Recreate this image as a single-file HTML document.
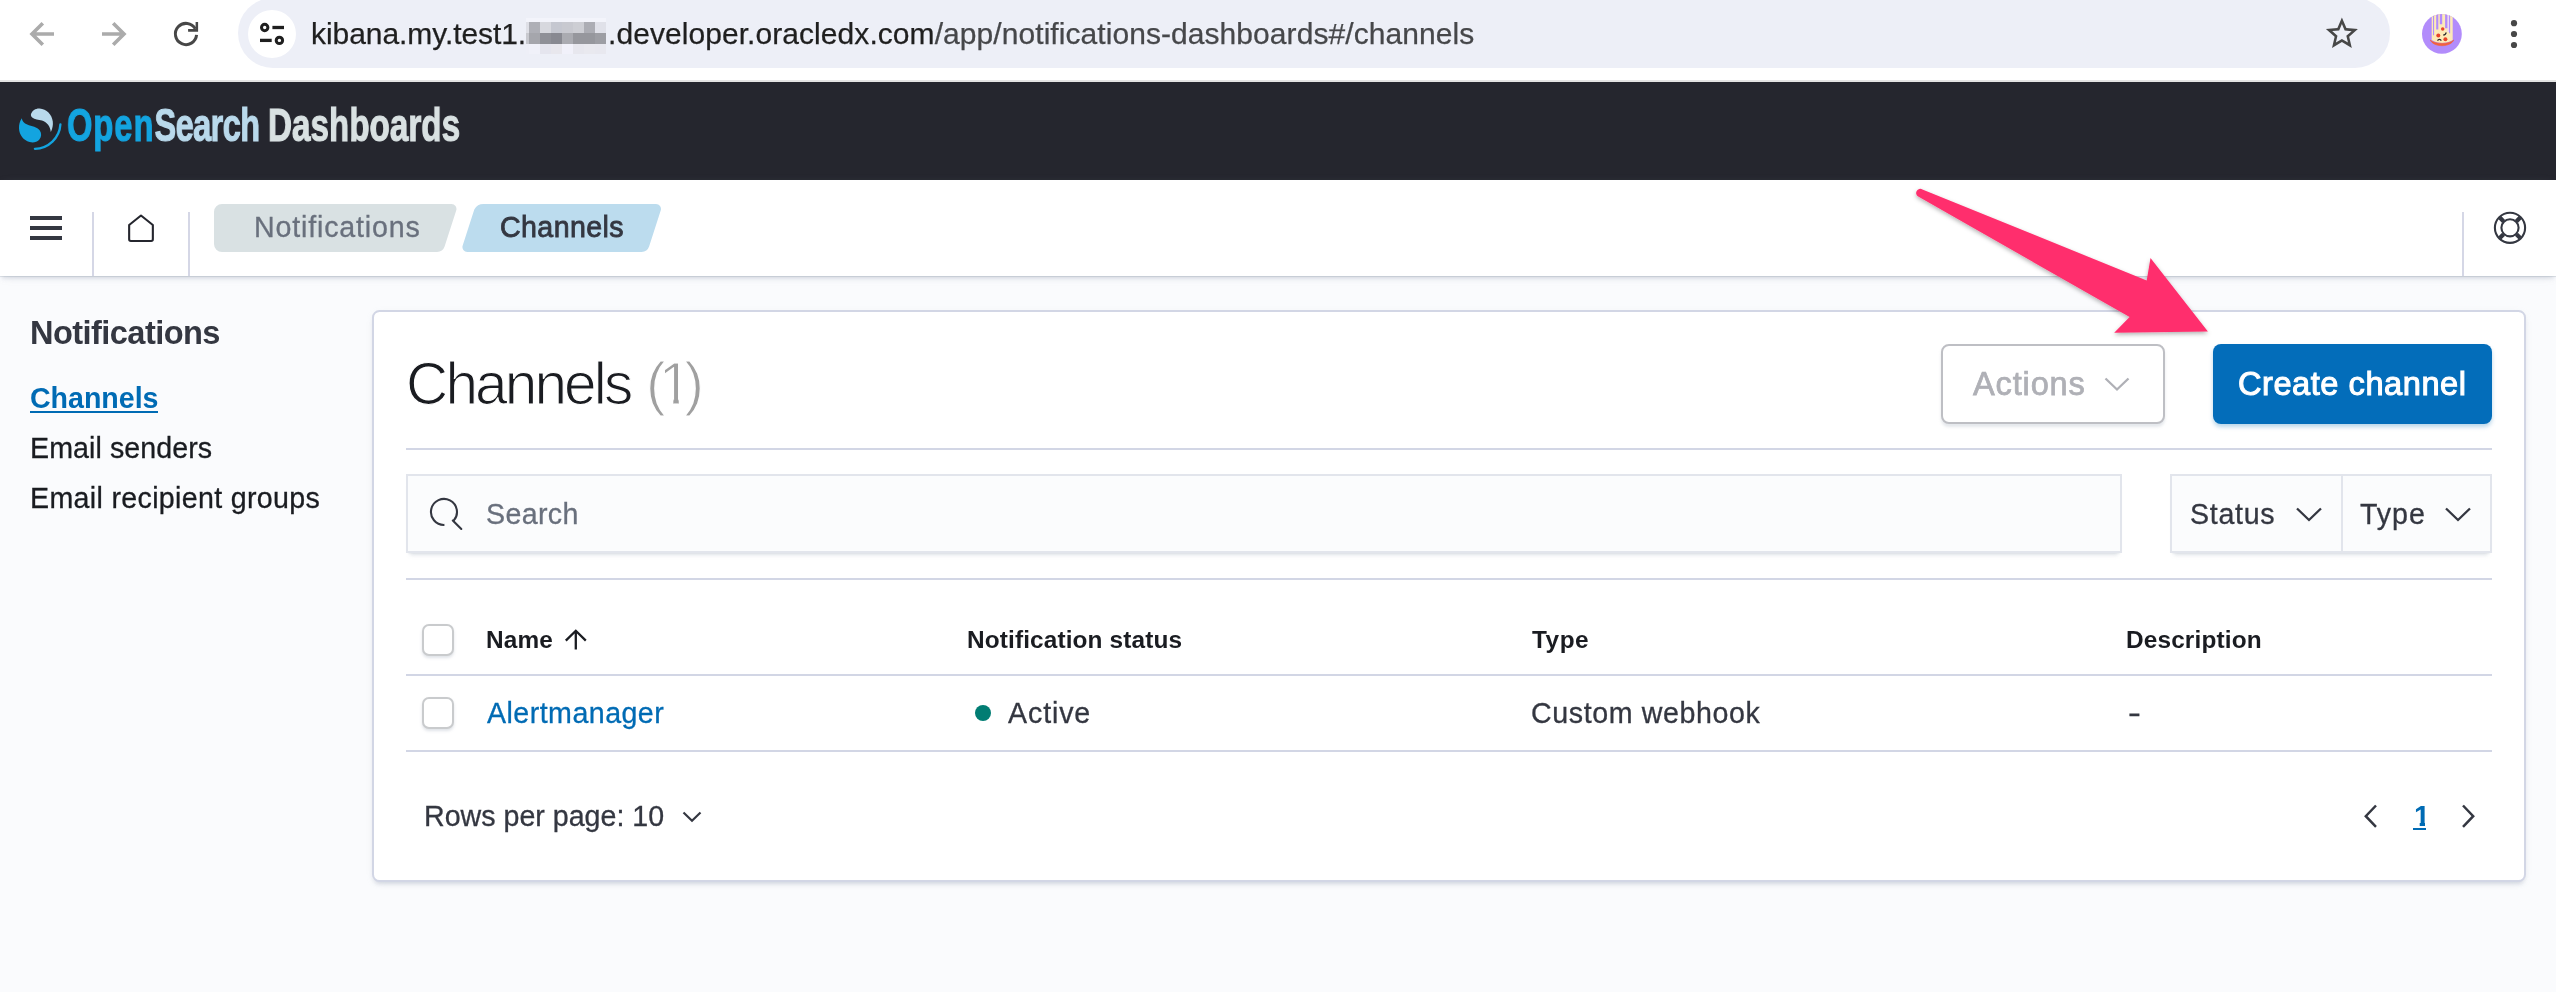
<!DOCTYPE html>
<html lang="en">
<head>
<meta charset="utf-8">
<title>Channels - Notifications - OpenSearch Dashboards</title>
<style>
*{box-sizing:border-box;margin:0;padding:0}
html,body{width:2556px;height:992px;overflow:hidden;background:#fafbfd}
body{position:relative;font-family:"Liberation Sans",sans-serif;color:#343741}
.abs{position:absolute}
.t{position:absolute;white-space:nowrap;line-height:1;will-change:transform}
/* browser toolbar */
#toolbar{left:0;top:0;width:2556px;height:80px;background:#fff}
#tbline{left:0;top:80px;width:2556px;height:2px;background:#e3e3e3}
#pill{left:238px;top:-2px;width:2152px;height:70px;border-radius:35px;background:#edeff7}
#siteinfo{left:248px;top:10px;width:48px;height:48px;border-radius:50%;background:#fff}
.url{font-size:30px;color:#1f1f1f;-webkit-text-stroke:.25px currentColor}
/* app header */
#hdr{left:0;top:82px;width:2556px;height:98px;background:#25262e}
.logo{font-weight:bold;font-size:46.5px;transform-origin:0 0;-webkit-text-stroke:1.1px currentColor}
/* breadcrumb bar */
#bar{left:0;top:180px;width:2556px;height:96px;background:#fff;box-shadow:0 4px 4px -2px rgba(152,162,179,.34),0 2px 10px -4px rgba(152,162,179,.34),0 1px 0 rgba(152,162,179,.25)}
.vsep{width:2px;top:212px;height:64px;background:#d5d7e6}
.crumb{top:204px;height:48px}
/* sidebar */
.nav{font-size:28.6px;color:#1a1c21;-webkit-text-stroke:.3px currentColor}
/* panel */
#panel{left:372px;top:310px;width:2154px;height:572px;background:#fff;border:2px solid #d2d6e5;border-radius:7.5px;box-shadow:0 4px 4px -2px rgba(152,162,179,.32),0 2px 10px -4px rgba(152,162,179,.32)}
.hr{left:406px;width:2086px;height:2px;background:#d2d6e5}
.fld{background:#fbfcfd;border:2px solid #e2e5ec;box-shadow:0 2px 2px -2px rgba(152,162,179,.25),0 6px 4px -4px rgba(152,162,179,.3)}
.cb{left:422px;width:32px;height:32px;border:2px solid #c9cbcd;border-radius:7px;background:#fff;box-shadow:0 2px 3px rgba(152,162,179,.3)}
.th{font-size:24.4px;font-weight:bold;color:#1a1c21}
.td{font-size:28.6px;color:#343741;-webkit-text-stroke:.3px currentColor}
</style>
</head>
<body>

<!-- ============ Browser toolbar ============ -->
<div class="abs" id="toolbar"></div>
<div class="abs" id="tbline"></div>
<div class="abs" id="pill"></div>
<div class="abs" id="siteinfo"></div>
<svg class="abs" id="tbicons" style="left:0;top:0" width="2556" height="80" viewBox="0 0 2556 80" fill="none">
  <!-- back -->
  <path d="M54 34H32.5M42.8 23.3L32 34l10.8 10.7" stroke="#ababab" stroke-width="3.6"/>
  <!-- forward -->
  <path d="M102 34h21.5M113.2 23.3L124 34l-10.8 10.7" stroke="#ababab" stroke-width="3.6"/>
  <!-- reload -->
  <path d="M196.560 34.920A10.600 10.600 0 1 1 195.300 28.900" stroke="#474747" stroke-width="3"/>
  <path d="M198.100 22.100v9.600h-10v-2.600h7.500v-7z" fill="#474747"/>
  <!-- tune / site info -->
  <circle cx="264.7" cy="27.5" r="3.2" stroke="#1f1f1f" stroke-width="3"/>
  <path d="M272.4 27.5H284" stroke="#1f1f1f" stroke-width="3.3"/>
  <path d="M260 40.4h11.7" stroke="#1f1f1f" stroke-width="3.3"/>
  <circle cx="279.4" cy="40.4" r="3.2" stroke="#1f1f1f" stroke-width="3"/>
  <!-- star -->
  <g transform="translate(2322.7 14.3) scale(1.6)"><path fill="#474747" fill-rule="evenodd" d="M22 9.24l-7.19-.62L12 2 9.19 8.63 2 9.24l5.46 4.73L5.82 21 12 17.27 18.18 21l-1.63-7.03L22 9.24zM12 15.4l-3.76 2.27 1-4.28-3.32-2.88 4.38-.38L12 6.1l1.71 4.04 4.38.38-3.32 2.88 1 4.28L12 15.4z"/></g>
  <!-- avatar -->
  <g id="avatar">
    <circle cx="2441.900" cy="33.900" r="19.900" fill="#b28cfb"/>
    <clipPath id="avc"><circle cx="2441.900" cy="33.900" r="19.900"/></clipPath>
    <g clip-path="url(#avc)">
      <path d="M2431.700 12h21v28c-6 4-15 4-21 0z" fill="#fdeab8"/>
      <rect x="2447.400" y="12" width="1.900" height="20" fill="#ecd6f7"/>
      <path d="M2433.550 12v23.300" stroke="#b28cfb" stroke-width="1.100"/>
      <path d="M2437.250 12v17.500" stroke="#b28cfb" stroke-width="2.100"/>
      <path d="M2441 12v12.200" stroke="#b28cfb" stroke-width="2.400"/>
      <path d="M2446.250 12v16.200" stroke="#b28cfb" stroke-width="2.300"/>
      <path d="M2449.600 12v21.200" stroke="#b28cfb" stroke-width="1.100"/>
      <path d="M2430.200 40c2.300 2.200 6.600 3.400 11.800 3.400s9.500-1.200 11.800-3.400c-1.800 3.600-6.300 5.700-11.800 5.700s-10-2.100-11.800-5.700z" fill="#f4623a" stroke="#f4623a" stroke-width=".6" stroke-linejoin="round"/>
      <circle cx="2442.700" cy="29" r="1.750" fill="#e8442a"/>
      <circle cx="2438.300" cy="35.500" r="2" fill="#e8442a"/>
      <circle cx="2445.400" cy="39.300" r="2" fill="#e8442a"/>
      <path d="M2443.300 35c1.500 0 2.600-1 2.800-2.500" stroke="#2b2b2b" stroke-width="1.400"/>
      <path d="M2437.500 40.600c.9-1.700 2.900-1.700 3.800 0" stroke="#2b2b2b" stroke-width="1.200"/>
    </g>
  </g>
  <!-- menu dots -->
  <circle cx="2514" cy="23.2" r="3.1" fill="#474747"/>
  <circle cx="2514" cy="34" r="3.1" fill="#474747"/>
  <circle cx="2514" cy="45" r="3.1" fill="#474747"/>
  <!-- blurred (pixelated) host segment -->
  <g id="blur" shape-rendering="crispEdges">
    <rect x="526.2" y="18.1" width="2.8" height="3.9" fill="#f3f4fb"/><rect x="529.0" y="18.1" width="11.1" height="3.9" fill="#f3f4fb"/><rect x="540.0" y="18.1" width="11.2" height="3.9" fill="#f3f4fb"/><rect x="551.1" y="18.1" width="10.9" height="3.9" fill="#f3f4fb"/><rect x="562.0" y="18.1" width="11.2" height="3.9" fill="#f3f4fb"/><rect x="573.1" y="18.1" width="10.9" height="3.9" fill="#f3f4fb"/><rect x="584.0" y="18.1" width="10.9" height="3.9" fill="#f3f4fb"/><rect x="594.9" y="18.1" width="11.4" height="3.9" fill="#f3f4fb"/>
    <rect x="526.2" y="22.0" width="2.8" height="11.2" fill="#dedfe6"/><rect x="529.0" y="22.0" width="11.1" height="11.2" fill="#aeafb6"/><rect x="540.0" y="22.0" width="11.2" height="11.2" fill="#d7d8de"/><rect x="551.1" y="22.0" width="10.9" height="11.2" fill="#c5c7d0"/><rect x="562.0" y="22.0" width="11.2" height="11.2" fill="#c8c9d0"/><rect x="573.1" y="22.0" width="10.9" height="11.2" fill="#cdced4"/><rect x="584.0" y="22.0" width="10.9" height="11.2" fill="#acadb4"/><rect x="594.9" y="22.0" width="11.4" height="11.2" fill="#e0e1e9"/>
    <rect x="526.2" y="33.1" width="2.8" height="10.7" fill="#c8c9cf"/><rect x="529.0" y="33.1" width="11.1" height="10.7" fill="#a5a6ac"/><rect x="540.0" y="33.1" width="11.2" height="10.7" fill="#8f9097"/><rect x="551.1" y="33.1" width="10.9" height="10.7" fill="#888991"/><rect x="562.0" y="33.1" width="11.2" height="10.7" fill="#aaabb1"/><rect x="573.1" y="33.1" width="10.9" height="10.7" fill="#96979d"/><rect x="584.0" y="33.1" width="10.9" height="10.7" fill="#96979d"/><rect x="594.9" y="33.1" width="11.4" height="10.7" fill="#9d9ea4"/>
    <rect x="526.2" y="43.8" width="2.8" height="10.5" fill="#eeeff7"/><rect x="529.0" y="43.8" width="11.1" height="10.5" fill="#f0f1f9"/><rect x="540.0" y="43.8" width="11.2" height="10.5" fill="#e5e5ee"/><rect x="551.1" y="43.8" width="10.9" height="10.5" fill="#e8e7ed"/><rect x="562.0" y="43.8" width="11.2" height="10.5" fill="#f1f1fa"/><rect x="573.1" y="43.8" width="10.9" height="10.5" fill="#e7e7ee"/><rect x="584.0" y="43.8" width="10.9" height="10.5" fill="#e9e9ef"/><rect x="594.9" y="43.8" width="11.4" height="10.5" fill="#e8e8ef"/>
  </g>
</svg>
<span class="t url" id="url1" style="left:311.00px;top:19px;letter-spacing:-0.067px">kibana.my.test1.</span>
<span class="t url" id="url2" style="left:608.00px;top:19px;letter-spacing:0.065px">.developer.oracledx.com<span style="color:#46474a">/app/notifications-dashboards#/channels</span></span>

<!-- ============ App header ============ -->
<div class="abs" id="hdr"></div>
<svg class="abs" id="mark" style="left:14px;top:100px" width="54" height="56" viewBox="14 100 54 56" fill="none">
  <!-- light swoosh -->
  <path d="M31 114c1.200-3.600 4.600-5.800 8.600-5.600 7 .4 12.400 5.800 13.200 13.200.400 3.700-.300 7.200-2 10.300-.600-5.500-3.600-9.500-8.800-11.300-3.400-1.200-7.400-1.200-9.800-3.200-1-.900-1.500-2-1.200-3.400z" fill="#b9d9eb"/>
  <!-- blue blob -->
  <path d="M21.800 118.300c.300 3 2.300 5 5.400 6.300 4.600 1.900 10 2.200 12.600 6 2 3 1.800 6.600-.600 9.200-2.400 2.500-6 3.300-9.600 2.300-6.200-1.700-10.400-7.200-10.600-13.800-.100-3.800.800-7.200 2.800-10z" fill="#13a4e0"/>
  <!-- outer arc -->
  <path d="M60.400 124.400a26 26 0 0 1-25.500 24.400" stroke="#13a4e0" stroke-width="2.300" stroke-linecap="round"/>
</svg>
<span class="t logo" id="lg1" style="left:67.2px;top:102px;color:#13a4e0;transform:scaleX(.7025)"><span style="letter-spacing:1.4px">Open</span><span style="color:#b9d9eb;letter-spacing:-.95px">Search</span></span>
<span class="t logo" id="lg2" style="left:267.5px;top:102px;color:#d9e1e2;transform:scaleX(.7145)">Dashboards</span>

<!-- ============ Breadcrumb bar ============ -->
<div class="abs" id="bar"></div>
<!-- hamburger -->
<div class="abs" style="left:30px;top:216px;width:32px;height:4px;background:#343741"></div>
<div class="abs" style="left:30px;top:226px;width:32px;height:4px;background:#343741"></div>
<div class="abs" style="left:30px;top:236px;width:32px;height:4px;background:#343741"></div>
<div class="abs vsep" style="left:92px"></div>
<!-- home -->
<svg class="abs" id="home" style="left:124px;top:210px" width="34" height="36" viewBox="124 210 34 36" fill="none">
  <path d="M141 215.500l11.850 9.500v14.300a1.700 1.700 0 0 1-1.700 1.700h-20.300a1.700 1.700 0 0 1-1.700-1.700v-14.300z" stroke="#25262e" stroke-width="2.100" stroke-linejoin="round"/>
</svg>
<div class="abs vsep" style="left:188px"></div>
<!-- breadcrumbs -->
<svg class="abs" id="crumbs" style="left:210px;top:200px" width="460" height="56" viewBox="210 200 460 56">
  <path d="M222 204h229.500a5 5 0 0 1 4.700 6.600l-11.600 36a8 8 0 0 1-7.600 5.400H222a8 8 0 0 1-8-8v-32a8 8 0 0 1 8-8z" fill="#d9e1e3"/>
  <path d="M484.600 204H656a5 5 0 0 1 4.700 6.600l-11.600 36a8 8 0 0 1-7.600 5.400H467.400a5 5 0 0 1-4.700-6.600l11.600-36a10.800 10.800 0 0 1 10.300-5.400z" fill="#bcdcee"/>
</svg>
<span class="t" id="bc1" style="left:254.00px;top:213.2px;font-size:28.6px;color:#69707d;-webkit-text-stroke:.3px currentColor;letter-spacing:0.83px">Notifications</span>
<span class="t" id="bc2" style="left:499.70px;top:213.2px;font-size:28.6px;color:#343741;-webkit-text-stroke:.8px #343741;letter-spacing:0.399px">Channels</span>
<div class="abs vsep" style="left:2462px"></div>
<!-- help (lifesaver) -->
<svg class="abs" id="help" style="left:2490px;top:208px" width="40" height="40" viewBox="2490 208 40 40" fill="none">
  <circle cx="2510" cy="227.800" r="15.100" stroke="#343741" stroke-width="2.100"/>
  <circle cx="2510" cy="227.800" r="8.600" stroke="#343741" stroke-width="2.100"/>
  <path d="M2499.800 217.600l3.800 3.800M2520.200 217.600l-3.800 3.800M2499.800 238l3.800-3.800M2520.200 238l-3.800-3.800" stroke="#343741" stroke-width="4.200"/>
</svg>

<!-- ============ Sidebar ============ -->
<span class="t" id="sbT" style="left:30.00px;top:317.3px;font-size:32.6px;font-weight:bold;color:#343741;letter-spacing:-0.570px">Notifications</span>
<span class="t nav" id="sb1" style="left:30.20px;top:384.4px;font-weight:bold;color:#006bb4;letter-spacing:-0.030px;-webkit-text-stroke:0">Channels</span>
<div class="abs" id="sb1u" style="left:30px;top:410.5px;width:128px;height:2.600px;background:#006bb4"></div>
<span class="t nav" id="sb2" style="left:30.00px;top:434.2px;letter-spacing:0.080px">Email senders</span>
<span class="t nav" id="sb3" style="left:30.00px;top:484.4px;letter-spacing:0.330px">Email recipient groups</span>

<!-- ============ Panel ============ -->
<div class="abs" id="panel"></div>
<span class="t" id="ttl" style="left:406.00px;top:354.8px;font-size:58.5px;color:#1a1c21;-webkit-text-stroke:1.200px #fff;letter-spacing:-2.857px">Channels</span>
<span class="t" id="cnt" style="left:646.00px;top:354.8px;font-size:58.5px;color:#a0a0a0;-webkit-text-stroke:1.200px #fff;letter-spacing:-6.750px">(<span id="cnt1" style="display:inline-block;clip-path:polygon(0 0,100% 0,100% 44.1px,20px 44.1px,20px 100%,14.6px 100%,14.6px 44.1px,0 44.1px)">1</span>)</span>
<!-- Actions button -->
<div class="abs" id="actbtn" style="left:1941px;top:344px;width:224px;height:80px;border:2px solid #bebfc4;border-radius:8px;background:#fff;box-shadow:0 3px 3px rgba(152,162,179,.25)"></div>
<span class="t" id="act" style="left:1973.00px;top:367.5px;font-size:32.6px;color:#afb0b6;-webkit-text-stroke:.75px currentColor;letter-spacing:0.834px">Actions</span>
<svg class="abs" id="actch" style="left:2100px;top:372px" width="34" height="24" viewBox="2100 372 34 24" fill="none"><path d="M2105.500 378.500l11.500 11 11.500-11" stroke="#afb0b6" stroke-width="2.300"/></svg>
<!-- Create channel button -->
<div class="abs" id="crbtn" style="left:2213px;top:344px;width:279px;height:80px;border-radius:8px;background:#036dba;box-shadow:0 3px 4px rgba(0,107,180,.28)"></div>
<span class="t" id="cr" style="left:2238.00px;top:367.5px;font-size:32.6px;color:#fff;-webkit-text-stroke:1.05px #fff;letter-spacing:0.539px">Create channel</span>
<div class="abs hr" style="top:448px"></div>
<!-- search -->
<div class="abs fld" id="srch" style="left:406px;top:474px;width:1716px;height:79px"></div>
<svg class="abs" id="sico" style="left:426px;top:494px" width="40" height="40" viewBox="426 494 40 40" fill="none">
  <path d="M453.630 520.630A13 13 0 1 0 444.420 524.920" stroke="#343741" stroke-width="2.100"/>
  <path d="M452.800 520.500L461.300 528.900" stroke="#343741" stroke-width="2.100" stroke-linecap="round"/>
</svg>
<span class="t" id="sph" style="left:486.00px;top:500px;font-size:28.6px;color:#69707d;-webkit-text-stroke:.3px currentColor;letter-spacing:0.360px">Search</span>
<!-- filters -->
<div class="abs fld" id="flt" style="left:2170px;top:474px;width:322px;height:79px"></div>
<div class="abs" style="left:2340.500px;top:476px;width:2px;height:75px;background:#e2e5ec"></div>
<span class="t" id="f1" style="left:2190.00px;top:500px;font-size:28.6px;color:#343741;-webkit-text-stroke:.3px currentColor;letter-spacing:0.700px">Status</span>
<svg class="abs" style="left:2292px;top:502px" width="34" height="24" viewBox="2292 502 34 24" fill="none"><path d="M2297 508.500l12 11.500 12-11.500" stroke="#343741" stroke-width="2.300"/></svg>
<span class="t" id="f2" style="left:2360.20px;top:500px;font-size:28.6px;color:#343741;-webkit-text-stroke:.3px currentColor;letter-spacing:0.933px">Type</span>
<svg class="abs" style="left:2441px;top:502px" width="34" height="24" viewBox="2441 502 34 24" fill="none"><path d="M2446 508.500l12 11.500 12-11.500" stroke="#343741" stroke-width="2.300"/></svg>
<div class="abs hr" style="top:578px"></div>
<!-- table header -->
<div class="abs cb" style="top:624px"></div>
<span class="t th" id="h1" style="left:486.00px;top:627.5px;letter-spacing:0.133px">Name</span>
<svg class="abs" id="sortup" style="left:560px;top:626px" width="32" height="28" viewBox="560 626 32 28" fill="none"><path d="M575.800 649.500v-18.500M565.800 640.600l10-9.800 10 9.800" stroke="#1a1c21" stroke-width="2.300"/></svg>
<span class="t th" id="h2" style="left:966.8px;top:627.5px;letter-spacing:0.123px">Notification status</span>
<span class="t th" id="h3" style="left:1531.50px;top:627.5px;letter-spacing:0.499px">Type</span>
<span class="t th" id="h4" style="left:2126.40px;top:627.5px;letter-spacing:0.140px">Description</span>
<div class="abs hr" style="top:674px"></div>
<!-- row -->
<div class="abs cb" style="top:697px"></div>
<span class="t td" id="r1" style="left:487.00px;top:699px;color:#006bb4;letter-spacing:0.464px">Alertmanager</span>
<div class="abs" id="dot" style="left:974.500px;top:704.500px;width:16.500px;height:16.500px;border-radius:50%;background:#017d73"></div>
<span class="t td" id="r2" style="left:1007.80px;top:699px;letter-spacing:0.880px">Active</span>
<span class="t td" id="r3" style="left:1530.50px;top:699px;letter-spacing:0.615px">Custom webhook</span>
<span class="t td" id="r4" style="left:2128.30px;top:698.6px;transform:scaleX(1.35);transform-origin:0 0">-</span>
<div class="abs hr" style="top:750px"></div>
<!-- footer -->
<span class="t td" id="rp" style="left:424.10px;top:801.5px;letter-spacing:0.005px">Rows per page: 10</span>
<svg class="abs" style="left:678px;top:804px" width="28" height="24" viewBox="678 804 28 24" fill="none"><path d="M683.500 812.500l8.500 8.300 8.500-8.300" stroke="#343741" stroke-width="2.200"/></svg>
<svg class="abs" id="pg" style="left:2356px;top:796px" width="126" height="40" viewBox="2356 796 126 40" fill="none">
  <path d="M2376 805.500l-10.200 10.700 10.200 10.700" stroke="#343741" stroke-width="2.500"/>
  <path d="M2463 805.500l10.200 10.700-10.200 10.700" stroke="#343741" stroke-width="2.500"/>
</svg>
<span class="t td" id="p1" style="left:2414.10px;top:801.5px;font-weight:bold;color:#006bb4;-webkit-text-stroke:0;clip-path:polygon(0 0,100% 0,100% 19.5px,11px 19.5px,11px 100%,5.7px 100%,5.7px 19.5px,0 19.5px)">1</span>
<div class="abs" id="p1u" style="left:2412.800px;top:828px;width:13.200px;height:2.300px;background:#006bb4"></div>

<!-- ============ Arrow annotation ============ -->
<svg class="abs" id="arrow" style="left:1890px;top:170px;overflow:visible" width="340" height="190" viewBox="1890 170 340 190">
  <defs><filter id="ash" x="-10%" y="-10%" width="120%" height="130%"><feDropShadow dx="0" dy="2" stdDeviation="2" flood-color="#000" flood-opacity=".3"/></filter></defs>
  <path filter="url(#ash)" d="M1922.400 189.400L2146.700 280.500L2150.500 257.900L2207.900 331.600L2114.200 332.800L2129.600 316.900L1918.200 196.600A3.900 3.900 0 0 1 1922.400 189.400Z" fill="#ff2f6d"/>
</svg>

</body>
</html>
